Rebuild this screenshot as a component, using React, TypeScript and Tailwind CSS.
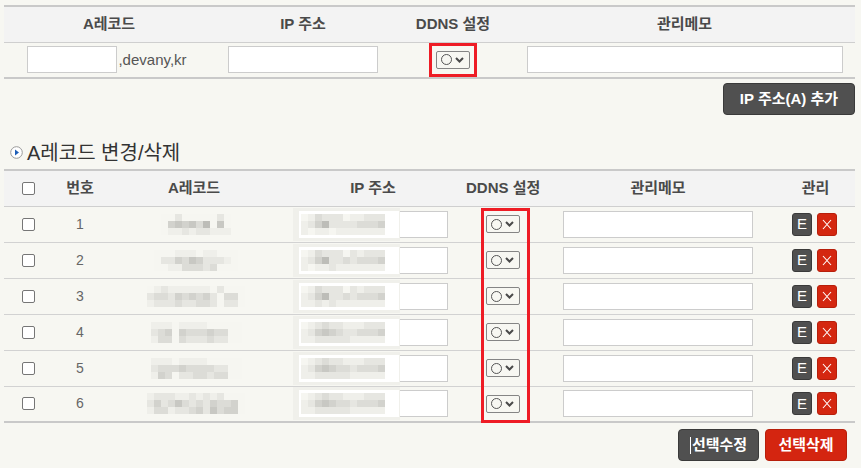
import React from 'react'

const font = { fontFamily: '"Liberation Sans", "Noto Sans CJK KR", sans-serif' }

const grays = ['#f6f6f1', '#efefea', '#e6e6e1', '#dcdcd7', '#d2d2cd', '#c8c8c3', '#bdbdb8']

// mosaic pattern for blurred values: each string is one 7px row of blocks
const rows = [
  { no: 1, a: ['0020000020', '0454536050', '0112122111'], ip: ['013222011222', '124622223334', '101101111111'] },
  { no: 2, a: ['000111011000', '022435422210', '001133323000'], ip: ['013222021222', '124622323334', '101121111111'] },
  { no: 3, a: ['01211111102000', '23324343420330', '12223223320220'], ip: ['013222021222', '124622323334', '112121111111'] },
  { no: 4, a: ['1110111100000', '2340433343300', '1330322232200'], ip: ['012322111222', '124543223334', '112222211111'] },
  { no: 5, a: ['1110111100000', '2333433332200', '1430223323300'], ip: ['012322111222', '124543323334', '112222211111'] },
  { no: 6, a: ['12221121212000', '24235323243340', '13312234253440'], ip: ['012322111222', '124543323334', '112222211111'] },
]

const Mosaic = ({ pattern }: { pattern: string[] }) => (
  <div className="flex flex-col">
    {pattern.map((line, i) => (
      <div key={i} className="flex">
        {line.split('').map((c, j) => (
          <div key={j} className="w-[7px] h-[7px]" style={{ backgroundColor: grays[Number(c)] }} />
        ))}
      </div>
    ))}
  </div>
)

const Select = () => (
  <div className="w-[34px] h-[18px] border border-[#858585] rounded-[2px] flex items-center pl-[4px] gap-[3px]">
    <div className="w-[11px] h-[11px] rounded-full border border-[#555]" />
    <svg width="9" height="6" viewBox="0 0 9 6">
      <path d="M1 1 L4.5 4.5 L8 1" stroke="#4a4a4a" strokeWidth="2" fill="none" />
    </svg>
  </div>
)

const Checkbox = () => (
  <div className="w-[13px] h-[13px] border border-[#767676] rounded-[2px] bg-white mx-auto" />
)

const TextInput = ({ w }: { w: string }) => (
  <div className={`${w} h-[27px] border border-[#cccccc] bg-white`} />
)

export default function App() {
  return (
    <div style={font} className="w-[861px] h-[468px] bg-[#f7f7f2] pt-[5px] pl-[4px] pr-[6px] overflow-hidden">
      {/* A record add */}
      <table className="w-[851px] table-fixed border-t-2 border-b-2 border-[#c9c9c9]">
        <colgroup>
          <col className="w-[210px]" />
          <col className="w-[178px]" />
          <col className="w-[122px]" />
          <col />
        </colgroup>
        <thead>
          <tr className="bg-[#f3f3f3] border-b border-[#cfcfcf] text-[15px] font-bold text-[#4a4a4a] whitespace-nowrap">
            <th className="h-[36px] font-bold">A레코드</th>
            <th className="font-bold">IP 주소</th>
            <th className="font-bold">DDNS 설정</th>
            <th className="font-bold">관리메모</th>
          </tr>
        </thead>
        <tbody>
          <tr>
            <td className="h-[36px]">
              <div className="flex items-center justify-center">
                <TextInput w="w-[90px]" />
                <span className="text-[15px] text-[#555] ml-[1px] mr-[4px]">,devany,kr</span>
              </div>
            </td>
            <td>
              <div className="flex justify-center">
                <TextInput w="w-[150px]" />
              </div>
            </td>
            <td>
              <div className="flex justify-center">
                <div className="border-[3px] border-[#ee1c25] w-[48px] h-[34px] flex items-center justify-center">
                  <Select />
                </div>
              </div>
            </td>
            <td>
              <div className="flex justify-center">
                <TextInput w="w-[316px]" />
              </div>
            </td>
          </tr>
        </tbody>
      </table>

      <div className="flex justify-end mt-[4px]">
        <button className="h-[32px] w-[132px] bg-[#505050] border border-[#3a3a3a] rounded-[4px] text-white text-[15px] font-bold">
          IP 주소(A) 추가
        </button>
      </div>

      {/* change / delete */}
      <div className="flex items-center h-[25px] mt-[25px] mb-[4px] pl-[6px]">
        <svg width="13" height="13" viewBox="0 0 13 13">
          <circle cx="6.5" cy="6.5" r="5.8" fill="#fff" stroke="#9a9a9a" strokeWidth="1" />
          <path d="M5 3.5 L9 6.5 L5 9.5 Z" fill="#1f5fb8" />
        </svg>
        <span className="ml-[4px] text-[20px] text-[#333]">A레코드 변경/삭제</span>
      </div>

      <div className="relative">
        <table className="w-[851px] table-fixed border-t-2 border-b-2 border-[#c9c9c9]">
          <colgroup>
            <col className="w-[48px]" />
            <col className="w-[56px]" />
            <col className="w-[172px]" />
            <col className="w-[186px]" />
            <col className="w-[74px]" />
            <col className="w-[236px]" />
            <col />
          </colgroup>
          <thead>
            <tr className="bg-[#f3f3f3] border-b border-[#cfcfcf] text-[15px] text-[#4a4a4a] whitespace-nowrap">
              <th className="h-[36px]"><Checkbox /></th>
              <th className="font-bold">번호</th>
              <th className="font-bold">A레코드</th>
              <th className="font-bold">IP 주소</th>
              <th className="font-bold">DDNS 설정</th>
              <th className="font-bold">관리메모</th>
              <th className="font-bold">관리</th>
            </tr>
          </thead>
          <tbody>
            {rows.map((r, i) => (
              <tr key={r.no} className={i < rows.length - 1 ? 'border-b border-[#d2d2d2]' : ''}>
                <td className="h-[36px]"><Checkbox /></td>
                <td className="text-center text-[14px] text-[#666]">{r.no}</td>
                <td>
                  <div className="flex justify-center pl-[4px]">
                    <Mosaic pattern={r.a} />
                  </div>
                </td>
                <td>
                  <div className="relative w-[150px] h-[27px] mx-auto border border-[#cccccc] bg-white">
                    <div className="absolute -left-[6px] -top-[4px] w-[107px] h-[33px] bg-[#f0f0eb] pl-[6px] pt-[3px]">
                      <div className="bg-white h-[27px] w-[100px] flex items-center pl-[2px]">
                        <Mosaic pattern={r.ip} />
                      </div>
                    </div>
                  </div>
                </td>
                <td>
                  <div className="flex justify-center">
                    <Select />
                  </div>
                </td>
                <td>
                  <div className="flex justify-center">
                    <TextInput w="w-[190px]" />
                  </div>
                </td>
                <td>
                  <div className="flex justify-center gap-[5px] pr-[2px]">
                    <span className="w-[20px] h-[23px] bg-[#505050] border border-[#3a3a3a] rounded-[3px] text-white text-[15px] flex items-center justify-center">E</span>
                    <span className="w-[20px] h-[23px] bg-[#d42710] border border-[#b71f0b] rounded-[3px] flex items-center justify-center">
                      <svg width="10" height="11" viewBox="0 0 10 11">
                        <path d="M1 1 L9 10 M9 1 L1 10" stroke="#fff" strokeWidth="1.1" fill="none" />
                      </svg>
                    </span>
                  </div>
                </td>
              </tr>
            ))}
          </tbody>
        </table>
        <div className="absolute left-[477px] top-[39px] w-[49px] h-[215px] border-[3px] border-[#ee1c25] pointer-events-none" />
      </div>

      <div className="flex justify-end gap-[6px] mt-[6px] pr-[8px]">
        <button className="h-[32px] w-[81px] bg-[#505050] border border-[#3a3a3a] rounded-[4px] text-white text-[15px] font-bold flex items-center justify-center">
          <span className="w-px h-[17px] bg-white mr-px" />
          선택수정
        </button>
        <button className="h-[32px] w-[82px] bg-[#d42510] border border-[#b71f0b] rounded-[4px] text-white text-[15px] font-bold">
          선택삭제
        </button>
      </div>
    </div>
  )
}
